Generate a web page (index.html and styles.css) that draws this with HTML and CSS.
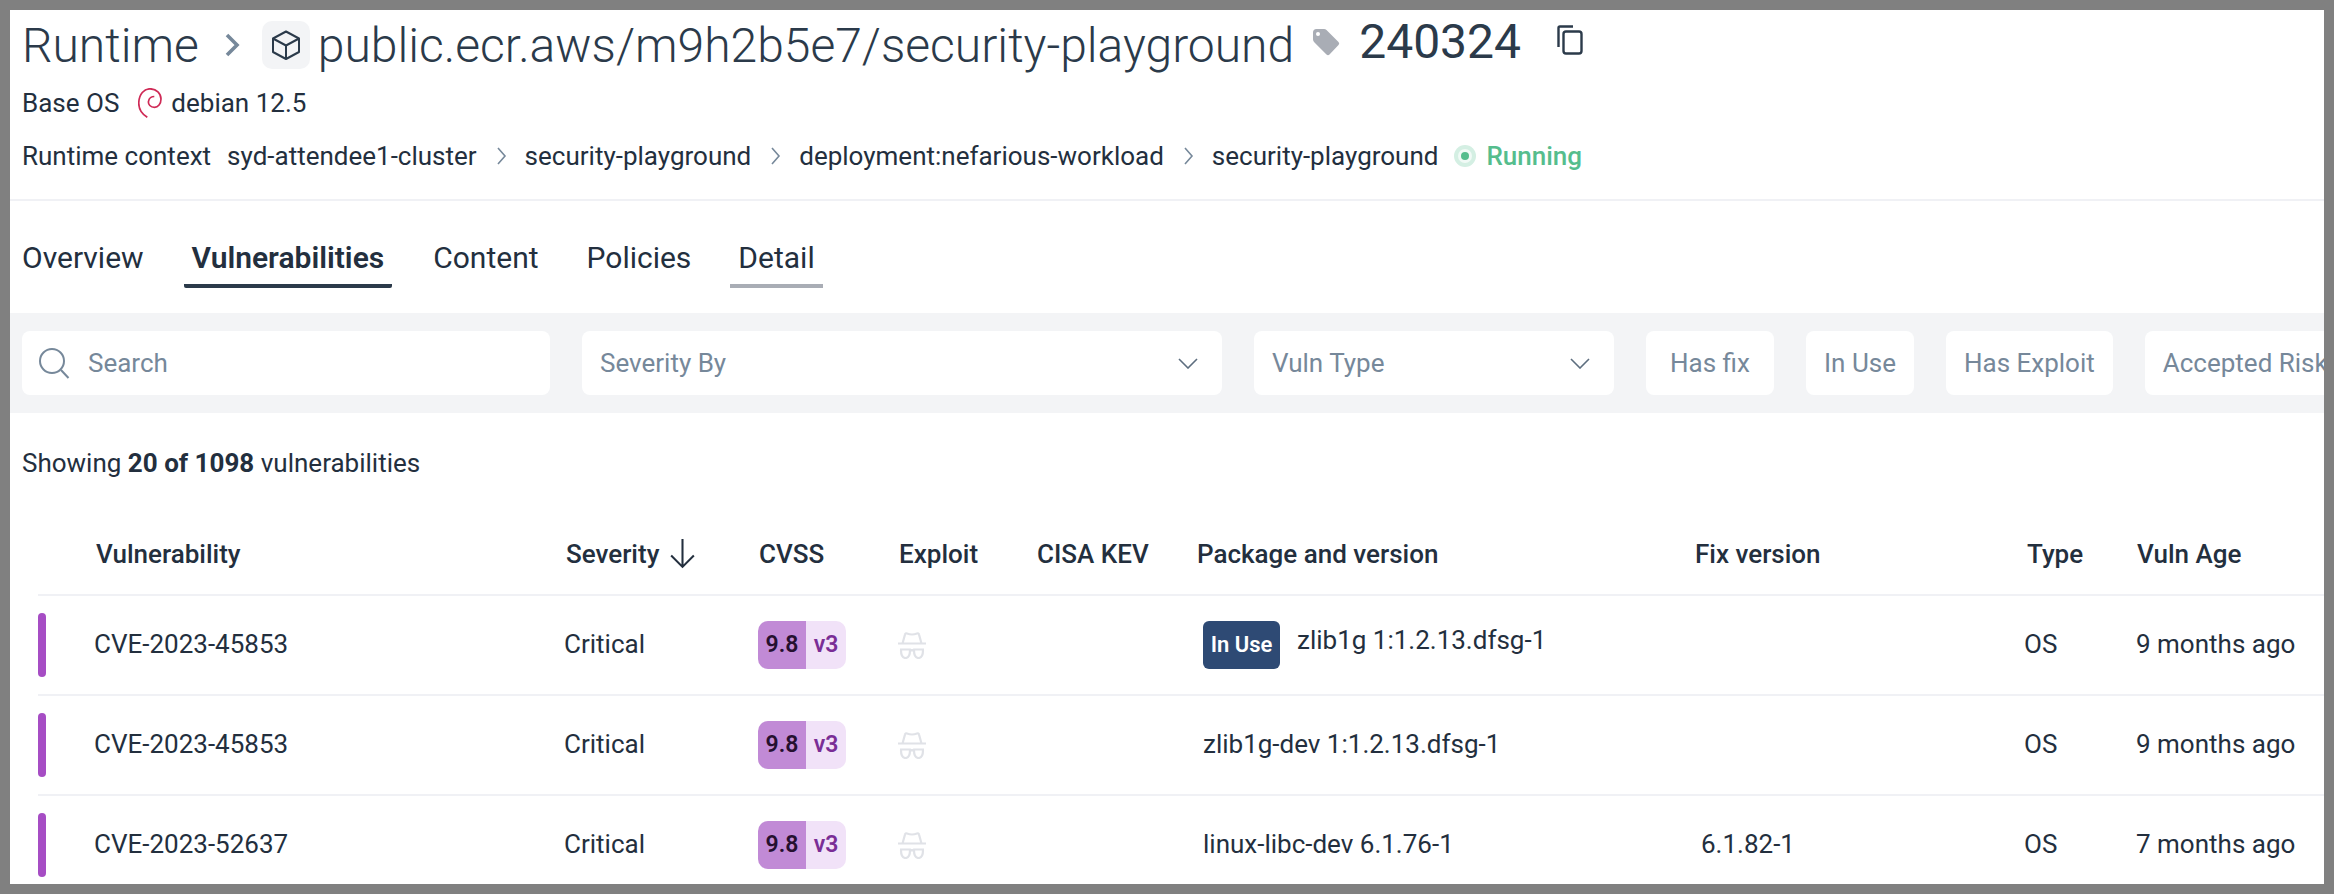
FILE: index.html
```html
<!DOCTYPE html>
<html lang="en">
<head>
<meta charset="utf-8">
<title>Runtime</title>
<link rel="stylesheet" href="styles.css">
</head>
<body>
<div class="frame">
  <header class="head">
    <div class="title-row">
      <span class="t-light">Runtime</span>
      <svg class="t-chev" viewBox="0 0 16 24"><path d="M3 2l10 10-10 10" fill="none" stroke="#76889a" stroke-width="3.6"/></svg>
      <span class="cube"><svg viewBox="0 0 32 32" width="32" height="32"><path d="M16 2.500l13 7v13.500l-13 7-13-7V9.500zM3 9.500l13 7 13-7M16 16.500v13.500" fill="none" stroke="#2b3a4a" stroke-width="2" stroke-linejoin="round"/></svg></span>
      <span class="t-light t-repo">public.ecr.aws/m9h2b5e7/security-playground</span>
      <svg class="t-tag" viewBox="0 0 28 28"><path d="M1 4.500Q1 1 4.500 1h7.500q1.500 0 2.500 1l12 12q1.500 1.500 0 3l-9 9.500q-1.500 1.500-3 0l-12-12Q1 13 1 11.500z" fill="#a9adb5"/><circle cx="6" cy="6" r="2" fill="#fff"/></svg>
      <span class="t-tagname">240324</span>
      <svg class="t-copy" viewBox="0 0 26 30"><path d="M1.500 22V3Q1.500 1.500 3 1.500H16" fill="none" stroke="#2b3a4a" stroke-width="2.400"/><rect x="6.500" y="6.500" width="18" height="22" rx="2.500" fill="none" stroke="#2b3a4a" stroke-width="2.400"/></svg>
    </div>
    <div class="os-row">
      <span>Base OS</span>
      <svg class="swirl" viewBox="0 0 24 30"><path d="M9.300 29.300C3 25.500.500 20 .800 14.300 1.200 6 6 .800 12 .800c6.500 0 11 4.500 11 10.200 0 5-3 8.300-6.500 8.300-4 0-6.500-2.800-6-6 .5-3 3.200-4.800 5.800-4.800" fill="none" stroke="#cf2a56" stroke-width="1.700"/></svg>
      <span>debian 12.5</span>
    </div>
    <div class="ctx-row">
      <span class="ctx-label">Runtime context</span>
      <span>syd-attendee1-cluster</span>
      <svg class="c-chev" viewBox="0 0 12 20"><path d="M2 2l7 8-7 8" fill="none" stroke="#76889a" stroke-width="1.600"/></svg>
      <span>security-playground</span>
      <svg class="c-chev" viewBox="0 0 12 20"><path d="M2 2l7 8-7 8" fill="none" stroke="#76889a" stroke-width="1.600"/></svg>
      <span>deployment:nefarious-workload</span>
      <svg class="c-chev" viewBox="0 0 12 20"><path d="M2 2l7 8-7 8" fill="none" stroke="#76889a" stroke-width="1.600"/></svg>
      <span>security-playground</span>
      <span class="status"><i class="dot"></i>Running</span>
    </div>
  </header>
  <nav class="tabs">
    <a class="tab tab-first">Overview</a>
    <a class="tab tab-on">Vulnerabilities</a>
    <a class="tab">Content</a>
    <a class="tab">Policies</a>
    <a class="tab tab-hover">Detail</a>
  </nav>
  <div class="filters">
    <div class="fld f-search"><svg viewBox="0 0 32 32" width="32" height="32"><circle cx="14" cy="14" r="12" fill="none" stroke="#76889a" stroke-width="2"/><path d="M23 23l7.500 8" stroke="#76889a" stroke-width="2"/></svg>Search</div>
    <div class="fld f-sev">Severity By<svg class="dd" viewBox="0 0 20 11"><path d="M1 1l9 9 9-9" fill="none" stroke="#5d6e7f" stroke-width="1.600"/></svg></div>
    <div class="fld f-type">Vuln Type<svg class="dd" viewBox="0 0 20 11"><path d="M1 1l9 9 9-9" fill="none" stroke="#5d6e7f" stroke-width="1.600"/></svg></div>
    <div class="fld f-fix">Has fix</div>
    <div class="fld">In Use</div>
    <div class="fld">Has Exploit</div>
    <div class="fld">Accepted Risk</div>
  </div>
  <p class="count">Showing <b>20 of 1098</b> vulnerabilities</p>
  <div class="t-head">
    <span>Vulnerability</span>
    <span class="sev-h">Severity<svg viewBox="0 0 26 32" width="27" height="33"><path d="M13 2v27M2 18l11 11 11-11" fill="none" stroke="#232f3e" stroke-width="2"/></svg></span>
    <span>CVSS</span><span>Exploit</span><span>CISA KEV</span><span>Package and version</span><span>Fix version</span><span>Type</span><span>Vuln Age</span>
  </div>
  <div class="t-row">
    <i class="bar"></i><span>CVE-2023-45853</span><span>Critical</span>
    <span class="cvss"><b>9.8</b><em>v3</em></span>
    <svg class="spy" viewBox="0 0 30 27"><path d="M1 11.500h28M5.500 11.500L8 2.500q.3-1.500 2-1 5 2 10 0 1.700-.5 2 1l2.500 9M3 17.500h10q2 1.500 4 0h10M4 18q0 8 4.500 8t4.500-8M17 18q0 8 4.500 8t4.500-8" fill="none" stroke="#e0e2e7" stroke-width="2.200" stroke-linejoin="round"/></svg>
    <span class="pkg"><mark class="inuse">In Use</mark><span class="pkg-up">zlib1g 1:1.2.13.dfsg-1</span></span>
    <span></span><span>OS</span><span>9 months ago</span>
  </div>
  <div class="t-row">
    <i class="bar"></i><span>CVE-2023-45853</span><span>Critical</span>
    <span class="cvss"><b>9.8</b><em>v3</em></span>
    <svg class="spy" viewBox="0 0 30 27"><path d="M1 11.500h28M5.500 11.500L8 2.500q.3-1.500 2-1 5 2 10 0 1.700-.5 2 1l2.500 9M3 17.500h10q2 1.500 4 0h10M4 18q0 8 4.500 8t4.500-8M17 18q0 8 4.500 8t4.500-8" fill="none" stroke="#e0e2e7" stroke-width="2.200" stroke-linejoin="round"/></svg>
    <span class="pkg">zlib1g-dev 1:1.2.13.dfsg-1</span>
    <span></span><span>OS</span><span>9 months ago</span>
  </div>
  <div class="t-row">
    <i class="bar"></i><span>CVE-2023-52637</span><span>Critical</span>
    <span class="cvss"><b>9.8</b><em>v3</em></span>
    <svg class="spy" viewBox="0 0 30 27"><path d="M1 11.500h28M5.500 11.500L8 2.500q.3-1.500 2-1 5 2 10 0 1.700-.5 2 1l2.500 9M3 17.500h10q2 1.500 4 0h10M4 18q0 8 4.500 8t4.500-8M17 18q0 8 4.500 8t4.500-8" fill="none" stroke="#e0e2e7" stroke-width="2.200" stroke-linejoin="round"/></svg>
    <span class="pkg">linux-libc-dev 6.1.76-1</span>
    <span class="fix">6.1.82-1</span><span>OS</span><span>7 months ago</span>
  </div>
</div>
</body>
</html>
```
FILE: styles.css
```css
* { box-sizing: border-box; }
html, body { margin: 0; height: 100%; }
body { background: #808080; padding: 10px; overflow: hidden; font-family: Roboto, "Liberation Sans", sans-serif; color: #232f3e; }
.frame { background: #fff; width: 2314px; height: 874px; overflow: hidden; font-size: 26px; }
.head { height: 191px; padding: 0 12px; border-bottom: 2px solid #f0f1f5; }
.title-row { display: flex; align-items: center; height: 68px; padding-top: 2px; }
.t-light { font-size: 48px; font-weight: 300; color: #2b3a4a; white-space: nowrap; }
.t-chev { width: 16px; height: 24px; margin: 0 22px 0 25px; }
.cube { width: 48px; height: 48px; background: #f3f4f6; border-radius: 10px; display: flex; align-items: center; justify-content: center; }
.t-repo { margin-left: 8px; }
.t-tag { width: 28px; height: 28px; margin: -6px 0 0 18px; }
.t-tagname { font-size: 48px; font-weight: 450; color: #2b3a4a; margin: -7px 0 0 19px; }
.t-copy { width: 26px; height: 30px; margin: -10px 0 0 36px; }
.os-row { display: flex; align-items: center; height: 40px; margin-top: 5px; }
.swirl { width: 24px; height: 30px; margin: 0 9px 0 19px; }
.ctx-row { display: flex; align-items: center; height: 40px; margin-top: 13px; white-space: nowrap; }
.ctx-label { margin-right: 16px; }
.c-chev { width: 12px; height: 20px; margin: 0 17px 0 19px; }
.status { display: flex; align-items: center; color: #55bd8d; font-weight: 500; margin-left: 16px; }
.dot { width: 22px; height: 22px; border-radius: 50%; background: #d4efe3; margin-right: 10px; display: flex; }
.dot::after { content: ""; width: 8px; height: 8px; margin: auto; border-radius: 50%; background: #55bd8d; box-shadow: 0 0 0 3px #f1faf6; }
.tabs { display: flex; height: 112px; padding: 0 12px; }
.tab { font-size: 30px; display: block; height: 87px; line-height: 44px; padding-top: 35px; margin-right: 48px; white-space: nowrap; }
.tab-first { margin-right: 43px; }
.tab-on { font-weight: 600; padding: 35px 8px 0; margin: 0 41px 0 -3px; border-bottom: 4px solid #2b3a4a; border-radius: 0 0 2px 2px; }
.tab-hover { padding: 35px 8px 0; margin: 0 0 0 -9px; border-bottom: 4px solid #a9adb5; }
.filters { height: 100px; background: #f3f4f6; padding: 18px 12px; display: flex; gap: 32px; overflow: hidden; }
.fld { height: 64px; background: #fff; border-radius: 8px; padding: 0 18px; display: flex; align-items: center; color: #76889a; white-space: nowrap; flex: none; }
.f-search { width: 528px; padding: 0 16px; gap: 18px; }
.f-sev { width: 640px; padding: 0 18px; justify-content: space-between; }
.f-type { width: 360px; padding: 0 18px; justify-content: space-between; }
.f-fix { width: 128px; justify-content: center; }
.dd { width: 20px; height: 11px; margin-right: 6px; }
.count { margin: 0; height: 100px; line-height: 100px; padding-left: 12px; }
.t-head, .t-row { display: grid; align-items: center; margin-left: 28px; white-space: nowrap; }
.t-head { height: 83px; font-weight: 500; grid-template-columns: 470px 193px 140px 138px 160px 498px 332px 110px 1fr; padding: 0 0 0 58px; border-bottom: 2px solid #f0f1f5; }
.sev-h { display: flex; align-items: center; gap: 10px; }
.t-row { height: 100px; grid-template-columns: 56px 470px 194px 139px 306px 498px 323px 112px 1fr; border-bottom: 2px solid #f0f1f5; }
.t-row > span:not(.cvss) { padding-bottom: 2px; }
.bar { width: 8px; height: 64px; background: #a64dc4; border-radius: 4px; }
.cvss { display: flex; width: 88px; height: 48px; border-radius: 10px; overflow: hidden; font-size: 23px; line-height: 48px; text-align: center; }
.cvss b { width: 48px; background: #c18ad6; color: #26102f; font-weight: 600; }
.cvss em { width: 40px; background: #f1e2f8; color: #7a2d96; font-style: normal; font-weight: 600; }
.spy { width: 30px; height: 27px; }
.pkg { display: flex; align-items: center; }
.inuse { background: #2e4a74; color: #fff; font-size: 22px; font-weight: 600; width: 77px; height: 48px; line-height: 48px; text-align: center; border-radius: 6px; margin: 2px 17px 0 0; }
.pkg-up { margin-top: -8px; }
```
